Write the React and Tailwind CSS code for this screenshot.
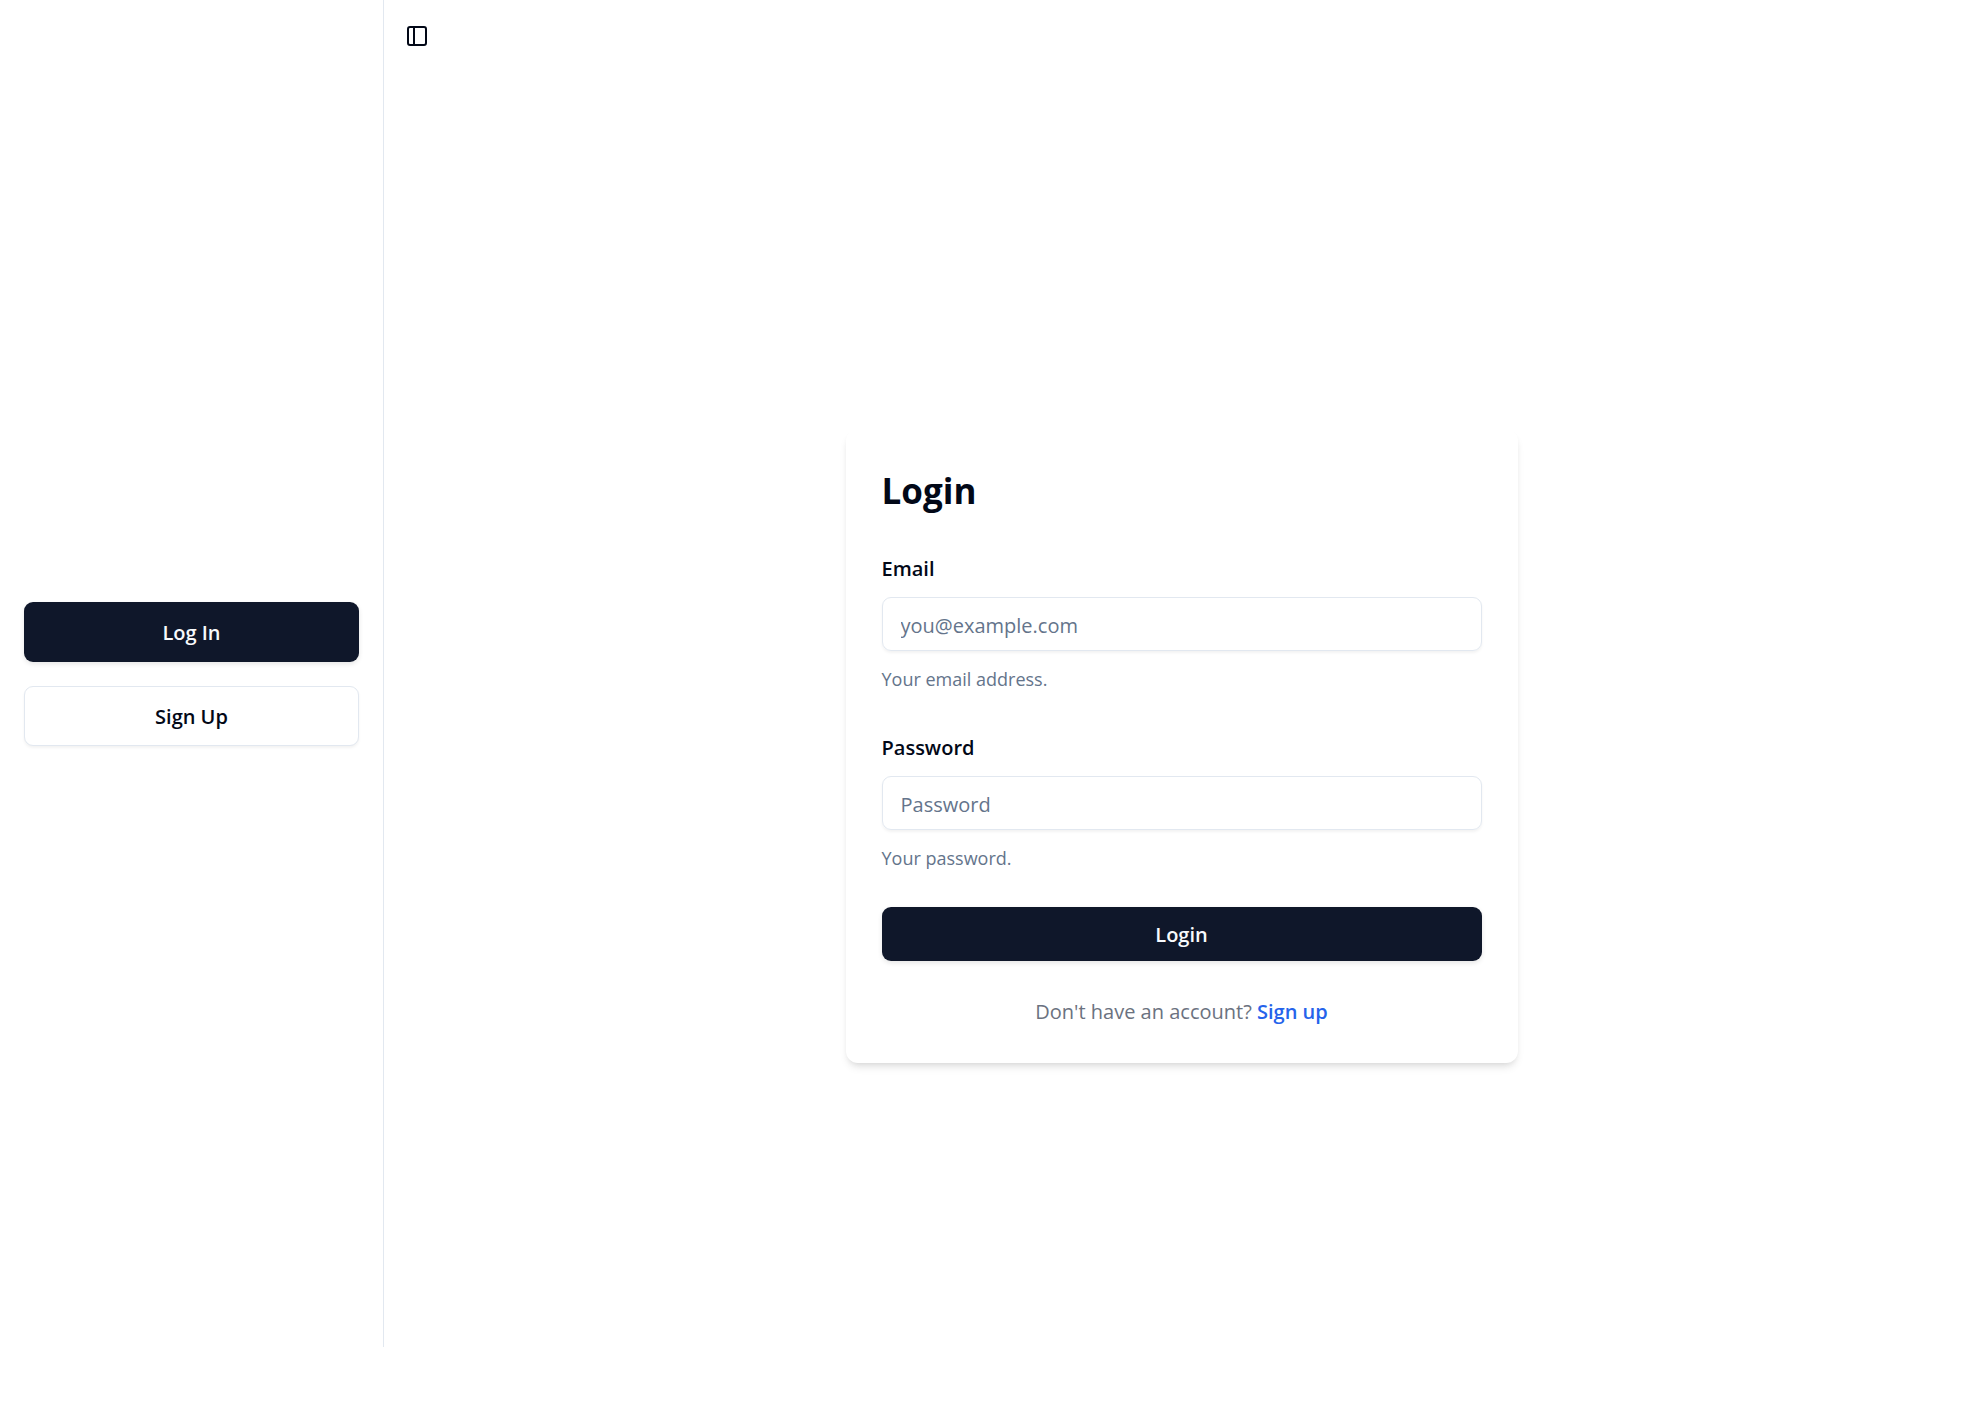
const baseButton =
  "flex w-full items-center justify-center rounded-[9px] pt-[3px] text-[20px] leading-[30px] font-semibold";
const primary = "bg-[#0f172a] text-[#f8fafc] shadow-[0_2px_5px_rgba(0,0,0,0.1)]";
const outline = "border border-[#e2e8f0] bg-white text-[#020817] shadow-[0_2px_3px_rgba(0,0,0,0.05)]";

function PanelIcon() {
  return (
    <svg
      className="size-6"
      viewBox="0 0 24 24"
      fill="none"
      stroke="currentColor"
      strokeWidth="2"
      strokeLinecap="round"
      strokeLinejoin="round"
      aria-hidden="true"
    >
      <rect x="3" y="3" width="18" height="18" rx="2" />
      <path d="M9 3v18" />
    </svg>
  );
}

function Sidebar() {
  return (
    <aside className="flex h-[calc(100vh-72px)] w-96 shrink-0 flex-col justify-center gap-6 border-r border-[#e2e8f0] px-6">
      <button type="button" className={`${baseButton} ${primary} h-15`}>
        Log In
      </button>
      <button type="button" className={`${baseButton} ${outline} h-15`}>
        Sign Up
      </button>
    </aside>
  );
}

function Field({ id, label, type, placeholder, hint }) {
  return (
    <div className="flex flex-col gap-3">
      <label htmlFor={id} className="pt-1 text-[20px] leading-8 font-semibold">
        {label}
      </label>
      <input
        id={id}
        type={type}
        placeholder={placeholder}
        aria-describedby={`${id}-hint`}
        className="h-[54px] w-full rounded-[9px] border border-[#e2e8f0] bg-transparent px-[18px] pt-[3px] text-[20px] shadow-[0_2px_3px_rgba(0,0,0,0.05)] placeholder:text-[#64748b]"
      />
      <p id={`${id}-hint`} className="pt-[3px] text-[18px] leading-[26px] text-[#64748b]">
        {hint}
      </p>
    </div>
  );
}

function LoginCard() {
  return (
    <div className="flex w-full max-w-2xl flex-col gap-9 rounded-xl bg-white p-9 shadow-[0_6px_9px_-2px_rgba(0,0,0,0.1),0_3px_6px_-3px_rgba(0,0,0,0.1)]">
      <h1 className="pt-1 text-[35px] leading-11 font-bold">Login</h1>
      <form className="flex flex-col gap-9" onSubmit={(e) => e.preventDefault()}>
        <Field
          id="email"
          label="Email"
          type="email"
          placeholder="you@example.com"
          hint="Your email address."
        />
        <Field
          id="password"
          label="Password"
          type="password"
          placeholder="Password"
          hint="Your password."
        />
        <button type="submit" className={`${baseButton} ${primary} h-[54px]`}>
          Login
        </button>
      </form>
      <p className="text-center text-[20px] leading-[30px] text-[#6b7280]">
        Don't have an account?{" "}
        <a href="#signup" className="font-semibold text-[#2563eb]">
          Sign up
        </a>
      </p>
    </div>
  );
}

export default function App() {
  return (
    <div className="flex min-h-screen bg-white font-['Open_Sans','Noto_Sans',sans-serif] text-[#020817]">
      <Sidebar />
      <div className="flex min-w-0 flex-1 flex-col">
        <header className="flex h-18 items-center px-[21px]">
          <button type="button" aria-label="Toggle sidebar">
            <PanelIcon />
          </button>
        </header>
        <main className="flex flex-1 items-center justify-center">
          <LoginCard />
        </main>
      </div>
    </div>
  );
}
